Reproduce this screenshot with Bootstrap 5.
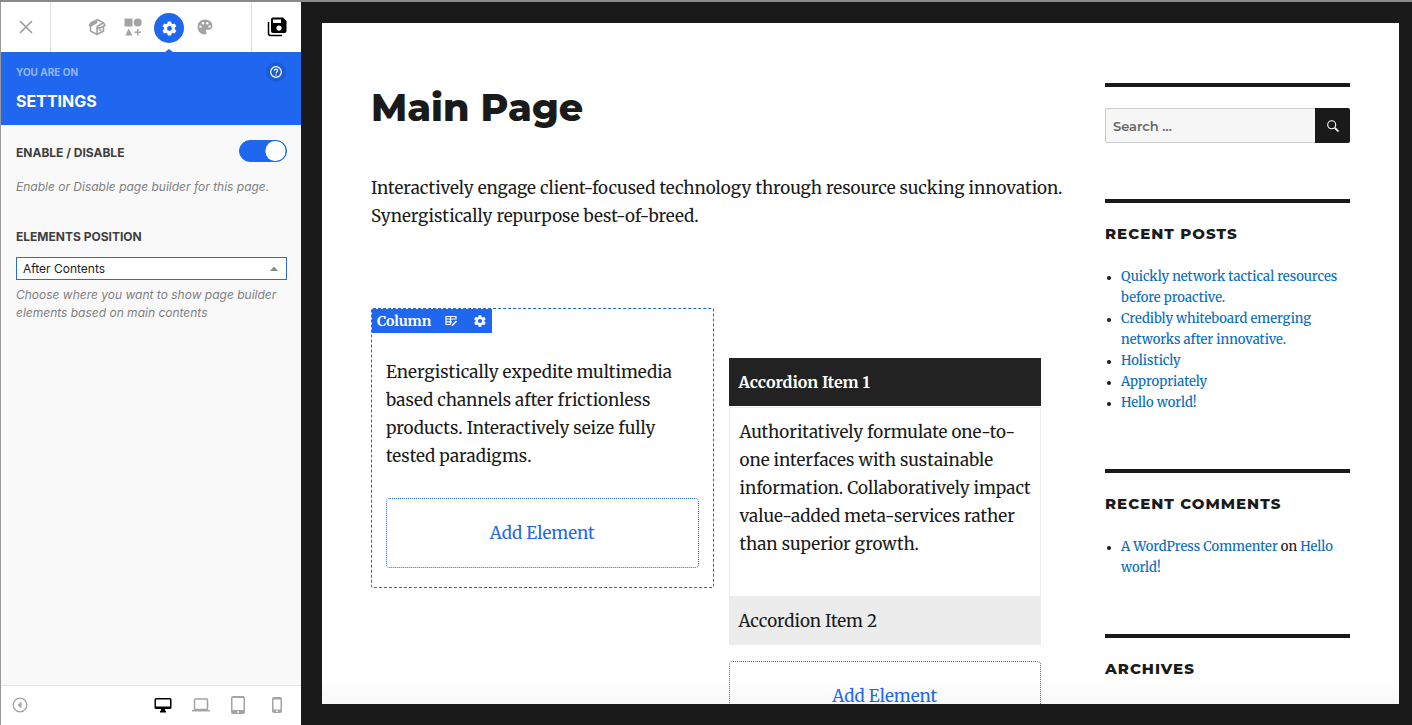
<!DOCTYPE html>
<html lang="en">
<head>
<meta charset="utf-8">
<meta name="viewport" content="width=device-width, initial-scale=1">
<title>Main Page – Page Builder</title>
<link rel="stylesheet" href="https://cdn.jsdelivr.net/npm/bootstrap@5.3.0/dist/css/bootstrap.min.css">
<style>
:root { --pb-blue: #1f67ee; --ink: #1a1a1a; --icon: #a3a3a3; }
body { background: var(--ink); font-family: Inter, "Liberation Sans", sans-serif; }
.shell { border-top: 2px solid #8a8a8a; }
button { background: none; border: 0; padding: 0; color: inherit; }
svg { display: block; }

/* builder panel */
.panel { width: 301px; background: #f9f9f9; border-left: 1px solid #999; font-size: 12px; line-height: 18px; color: #444; }
.tools { height: 50px; background: #fff; color: var(--icon); }
.tools .edge { width: 50px; }
.tool-set { gap: 6px; }
.tool { width: 30px; height: 30px; }
.tool-on { border-radius: 50%; background: var(--pb-blue); color: #fff; margin-top: 2px; }
.tool-on::after { content: ""; position: absolute; left: 11px; top: 36px; border: 4px solid transparent; border-top: 0; border-bottom: 3px solid var(--pb-blue); }
.panel-head { background: var(--pb-blue); color: #fff; height: 73px; padding: 10px 15px; }
.panel-head small { font-size: 10px; line-height: 20px; font-weight: 700; color: #92b7fa; }
.panel-head h2 { font-size: 16px; line-height: 20px; font-weight: 700; margin: 9px 0 0; }
.help { width: 20px; height: 20px; border-radius: 50%; background: #1b5cd5; color: #fff; }
.panel-body { padding: 15px 14px 0 15px; }
.label-cap { font-weight: 700; color: #3f3f3f; }
.hint { font-style: italic; color: #808080; margin: 0; }
.first-hint { margin-top: 12px; }
.next-hint { margin-top: 6px; }
.section-gap { margin-top: 32px; margin-bottom: 11px; }
.form-check-input.toggle { width: 48px; height: 22px; margin: 0; border-color: var(--pb-blue); background-size: 27px; }
.form-check-input.toggle:checked { background-color: var(--pb-blue); background-position: calc(100% + 3px) center; }
.pick { height: 23px; width: 100%; padding: 0 6px; border: 1px solid #2a6bd8; background: #fff; appearance: none; font-size: 12px; color: #222; }
.pick-arrow { right: 9px; top: 9px; pointer-events: none; color: #888; }
.devices { height: 40px; background: #fff; border-top: 1px solid #e4e4e4; color: var(--icon); padding: 0 17px 2px 11px; }

/* previewed page */
.stage { padding: 21px 13px 21px 21px; }
.sheet { background: linear-gradient(#fff 96%, #f8f8f8); color: var(--ink); padding: 60px 49px 0; font-family: Merriweather, "DejaVu Serif", serif; font-size: 17px; line-height: 28px; }
.page-main { flex: 1 1 0; min-width: 0; }
.sheet h1 { font: 800 38px/48px Montserrat, Inter, sans-serif; margin: 1px 0 42px; }
.intro { margin-bottom: 78px; }
.cell-on { border: 1px dashed #2464d8; border-radius: 2px; min-height: 280px; }
.cell-tag { height: 24px; width: 120px; padding: 0 5px; background: var(--pb-blue); color: #fff; font-size: 14px; font-weight: 700; line-height: 24px; }
.cell-body { padding: 25px 14px 19px; }
.cell-body p { margin-bottom: 28px; }
.cell-side { padding: 50px 15px 0; }
.add-el { height: 70px; border: 1px dotted var(--pb-blue); border-radius: 4px; color: var(--pb-blue); line-height: 16px; }
.acc-head { height: 49px; padding: 0 10px; background: #ececec; color: var(--ink); }
.acc-head.is-open { background: #222; color: #fff; font-weight: 700; font-size: 16px; height: 48px; }
.acc-body { border: 1px solid #ececec; border-bottom: 0; margin-top: 1px; padding: 10px 10px 38px; }
.aside { width: 245px; margin-left: 49px; font-size: 13px; font-weight: 500; line-height: 21px; }
.widget { border-top: 4px solid var(--ink); padding-top: 21px; margin-bottom: 56px; }
.widget h2 { font: 800 15px/20px Montserrat, Inter, sans-serif; letter-spacing: 1px; margin: 0 0 22px; }
.widget ul { padding-left: 16px; margin: 0; }
.widget li::marker { font-size: 11px; }
.widget a { color: #0a6ebd; text-decoration: none; }
.find { height: 35px; border: 1px solid #ccc; border-right: 0; border-radius: 2px 0 0 2px; background: #f7f7f7; padding: 0 7px; font: 600 13px Montserrat, Inter, sans-serif; min-width: 0; }
.find::placeholder { color: #686868; }
.find-go { width: 35px; height: 35px; background: var(--ink); color: #fff; border-radius: 0 2px 2px 0; }
</style>
</head>
<body>
<svg class="d-none">
  <symbol id="gear" viewBox="0 0 24 24"><path fill="currentColor" d="M19.400 13a7.500 7.500 0 0 0 0-2l2.100-1.700a.5.5 0 0 0 .1-.6l-2-3.500a.5.5 0 0 0-.6-.2l-2.500 1a7.300 7.300 0 0 0-1.700-1l-.4-2.600a.5.5 0 0 0-.5-.4h-4a.5.5 0 0 0-.5.4L9 5a7.700 7.700 0 0 0-1.700 1l-2.500-1a.5.5 0 0 0-.6.200l-2 3.500a.5.5 0 0 0 .1.600L4.500 11a8 8 0 0 0 0 2l-2.200 1.700a.5.5 0 0 0-.1.600l2 3.500c.1.200.4.300.6.200l2.500-1c.5.400 1.100.700 1.700 1l.4 2.600c0 .2.200.4.500.4h4c.3 0 .5-.2.500-.4l.4-2.600c.6-.3 1.200-.6 1.700-1l2.500 1c.2.100.5 0 .6-.2l2-3.500a.5.5 0 0 0-.1-.6zM12 15.500a3.500 3.500 0 1 1 0-7 3.500 3.500 0 0 1 0 7z"/></symbol>
</svg>
<div class="shell vh-100 d-flex overflow-hidden">
  <aside class="panel d-flex flex-column flex-shrink-0">
    <nav class="tools d-flex flex-shrink-0" aria-label="Builder tools">
      <button class="edge border-end d-flex align-items-center justify-content-center" aria-label="Close">
        <svg width="14" height="14" viewBox="0 0 14 14" fill="none" stroke="#999" stroke-width="1.500"><path d="M1 1l12 12M13 1L1 13"/></svg>
      </button>
      <div class="tool-set flex-fill d-flex align-items-center justify-content-center">
        <button class="tool d-flex align-items-center justify-content-center" aria-label="Templates"><svg width="18" height="18" viewBox="0 0 18 18" fill="none" stroke="currentColor" stroke-width="1.600" stroke-linejoin="round"><path d="M2.500 7.500V13L9 16.500l6.500-3.500V7.500M9 8.500v8M9 1.500l6.500 3.300L9 8.500M11.500 12.500l2-1M9 8.500l1.500 2 6.500-3-1.500-2.700"/><path fill="currentColor" stroke-width=".8" d="M9 1.500v3.300L3 8.500 1 7.500l1.500-3z"/></svg></button>
        <button class="tool d-flex align-items-center justify-content-center" aria-label="Elements"><svg width="18" height="18" viewBox="0 0 18 18" fill="currentColor"><path d="M.5.500h8v8h-8zM4.500 10.500l4 7h-7zM13 11h1.500v2.500H17V15h-2.500v2.500H13V15h-2.500v-1.500H13z"/><circle cx="13.700" cy="4.500" r="4"/></svg></button>
        <button class="tool tool-on position-relative d-flex align-items-center justify-content-center" aria-label="Settings"><svg width="17" height="17"><use href="#gear"/></svg></button>
        <button class="tool d-flex align-items-center justify-content-center" aria-label="Styles"><svg width="16" height="16" viewBox="0 0 16 16"><path fill="currentColor" fill-rule="evenodd" d="M8 .5C3.700.500.500 3.800.500 8s3.200 7.500 7.500 7.500c1 0 1.500-.8 1.500-1.500 0-1-.8-1.200-.8-2 0-.7.600-1.200 1.300-1.200h1.800c2 0 3.700-1.600 3.700-3.700C15.500 3.300 12.200.500 8 .500zM3.500 9a1.200 1.200 0 1 1 0-2.500 1.200 1.200 0 0 1 0 2.500zM6 5.500A1.200 1.200 0 1 1 6 3a1.200 1.200 0 0 1 0 2.500zM10.300 5.500a1.200 1.200 0 1 1 0-2.500 1.200 1.200 0 0 1 0 2.500zM12.600 8.800a1.200 1.200 0 1 1 0-2.500 1.200 1.200 0 0 1 0 2.500z"/></svg></button>
      </div>
      <button class="edge border-start d-flex align-items-center justify-content-center" aria-label="Save">
        <svg width="20" height="20" viewBox="0 0 20 20"><path d="M1.500 5v11.500a2 2 0 0 0 2 2H15" fill="none" stroke="#000" stroke-width="1.500"/><path fill="#000" fill-rule="evenodd" d="M6 .5h10L19.500 4v10a2 2 0 0 1-2 2H6a2 2 0 0 1-2-2V2.500a2 2 0 0 1 2-2zm0 2V6h8V2.500zm6 6a2.600 2.600 0 1 0 0 5.200 2.600 2.600 0 0 0 0-5.200z"/></svg>
      </button>
    </nav>
    <header class="panel-head flex-shrink-0">
      <div class="d-flex justify-content-between"><small>YOU ARE ON</small>
        <button class="help d-flex align-items-center justify-content-center" aria-label="Help"><svg width="12" height="12" viewBox="0 0 12 12" fill="none" stroke="currentColor" stroke-width="1.200"><circle cx="6" cy="6" r="5.300"/><path d="M4.300 4.800C4.300 2.500 7.700 2.600 7.700 4.600 7.700 5.800 6 5.800 6 7.300M6 8.300v1.200"/></svg></button>
      </div>
      <h2>SETTINGS</h2>
    </header>
    <div class="panel-body flex-fill">
      <div class="d-flex justify-content-between align-items-center">
        <label class="label-cap" for="enable">ENABLE / DISABLE</label>
        <div class="form-check form-switch p-0 m-0 pb-1"><input class="form-check-input toggle float-none d-block" type="checkbox" role="switch" id="enable" checked></div>
      </div>
      <p class="hint first-hint">Enable or Disable page builder for this page.</p>
      <label class="label-cap d-block section-gap" for="position">ELEMENTS POSITION</label>
      <div class="position-relative">
        <select class="pick d-block rounded-0" id="position"><option>After Contents</option><option>Before Contents</option></select>
        <svg class="pick-arrow position-absolute" width="8" height="5" viewBox="0 0 8 5"><path fill="currentColor" d="M0 5l4-4.500L8 5z"/></svg>
      </div>
      <p class="hint next-hint">Choose where you want to show page builder elements based on main contents</p>
    </div>
    <footer class="devices d-flex align-items-center flex-shrink-0">
      <button class="me-auto" aria-label="Collapse panel"><svg width="16" height="16" viewBox="0 0 16 16"><circle cx="8" cy="8" r="6.800" fill="none" stroke="currentColor" stroke-width="1.300"/><path fill="currentColor" d="M9.500 4.500v7L5.500 8z"/></svg></button>
      <div class="d-flex align-items-center gap-3">
        <button class="text-black" aria-label="Desktop"><svg width="18" height="16" viewBox="0 0 18 16"><path fill="currentColor" fill-rule="evenodd" d="M2 1h14a1.500 1.500 0 0 1 1.500 1.500v8A1.500 1.500 0 0 1 16 12h-5v1.500l1 .5v1.500H6V14l1-.5V12H2a1.500 1.500 0 0 1-1.500-1.500v-8A1.500 1.500 0 0 1 2 1zm0 1.500v7h14v-7z"/></svg></button>
        <button class="ms-1" aria-label="Laptop"><svg width="18" height="16" viewBox="0 0 18 16" fill="none" stroke="currentColor" stroke-width="1.500"><rect x="2.500" y="2" width="13" height="10.500" rx="1"/><path d="M0 13.700h18"/></svg></button>
        <button class="ms-1" aria-label="Tablet"><svg width="16" height="18" viewBox="0 0 16 18"><path fill="currentColor" fill-rule="evenodd" d="M3 0h10a2 2 0 0 1 2 2v14a2 2 0 0 1-2 2H3a2 2 0 0 1-2-2V2a2 2 0 0 1 2-2zm-.5 2v12h11V2zM8 15a1 1 0 1 0 0 2 1 1 0 0 0 0-2z"/></svg></button>
        <button class="ms-2" aria-label="Phone"><svg width="14" height="18" viewBox="0 0 14 18"><path fill="currentColor" fill-rule="evenodd" d="M4 1h6a2 2 0 0 1 2 2v12a2 2 0 0 1-2 2H4a2 2 0 0 1-2-2V3a2 2 0 0 1 2-2zm-.5 2.500v10h7v-10zM7 14.300a.9.9 0 1 0 0 1.800.9.9 0 0 0 0-1.800z"/></svg></button>
      </div>
    </footer>
  </aside>

  <div class="stage flex-fill overflow-hidden">
    <div class="sheet h-100 overflow-hidden d-flex align-items-start">
      <main class="page-main">
        <h1>Main Page</h1>
        <p class="intro text-nowrap">Interactively engage client-focused technology through resource sucking innovation.<br>Synergistically repurpose best-of-breed.</p>
        <div class="row g-0 align-items-start">
          <section class="col-6 cell-on">
            <div class="cell-tag d-flex align-items-center"><span class="me-auto">Column</span>
              <button class="text-white me-3" aria-label="Edit layout"><svg width="12" height="12" viewBox="0 0 12 12" fill="none" stroke="currentColor" stroke-width="1.200"><path d="M5.500 9.500h-4.500v-8h10v3M1 4h10M1 6.800h6M5.500 1.500v8"/><path stroke-width="1.600" d="M6.800 10.800L11.500 6"/></svg></button>
              <button class="text-white" aria-label="Column settings"><svg width="14" height="14"><use href="#gear"/></svg></button>
            </div>
            <div class="cell-body">
              <p class="text-nowrap">Energistically expedite multimedia<br>based channels after frictionless<br>products. Interactively seize fully<br>tested paradigms.</p>
              <button class="add-el w-100">Add Element</button>
            </div>
          </section>
          <section class="col-6 cell-side">
            <button class="acc-head is-open d-flex align-items-center w-100">Accordion Item 1</button>
            <div class="acc-body text-nowrap">Authoritatively formulate one-to-<br>one interfaces with sustainable<br>information. Collaboratively impact<br>value-added meta-services rather<br>than superior growth.</div>
            <button class="acc-head d-flex align-items-center w-100 mb-3">Accordion Item 2</button>
            <button class="add-el w-100">Add Element</button>
          </section>
        </div>
      </main>
      <aside class="aside flex-shrink-0">
        <form class="widget d-flex" role="search">
          <input class="find flex-fill" type="search" placeholder="Search …" aria-label="Search">
          <button class="find-go d-flex align-items-center justify-content-center" aria-label="Submit search"><svg width="12" height="12" viewBox="0 0 12 12" fill="none" stroke="currentColor"><circle cx="4.700" cy="4.700" r="4" stroke-width="1.100"/><path stroke-width="1.800" d="M7.800 7.800l3.700 3.700"/></svg></button>
        </form>
        <section class="widget">
          <h2>RECENT POSTS</h2>
          <ul>
            <li><a href="#">Quickly network tactical resources<br>before proactive.</a></li>
            <li><a href="#">Credibly whiteboard emerging<br>networks after innovative.</a></li>
            <li><a href="#">Holisticly</a></li>
            <li><a href="#">Appropriately</a></li>
            <li><a href="#">Hello world!</a></li>
          </ul>
        </section>
        <section class="widget">
          <h2>RECENT COMMENTS</h2>
          <ul><li><a href="#">A WordPress Commenter</a> on <a href="#">Hello<br>world!</a></li></ul>
        </section>
        <section class="widget"><h2>ARCHIVES</h2></section>
      </aside>
    </div>
  </div>
</div>
<script src="https://cdn.jsdelivr.net/npm/bootstrap@5.3.0/dist/js/bootstrap.bundle.min.js"></script>
</body>
</html>
